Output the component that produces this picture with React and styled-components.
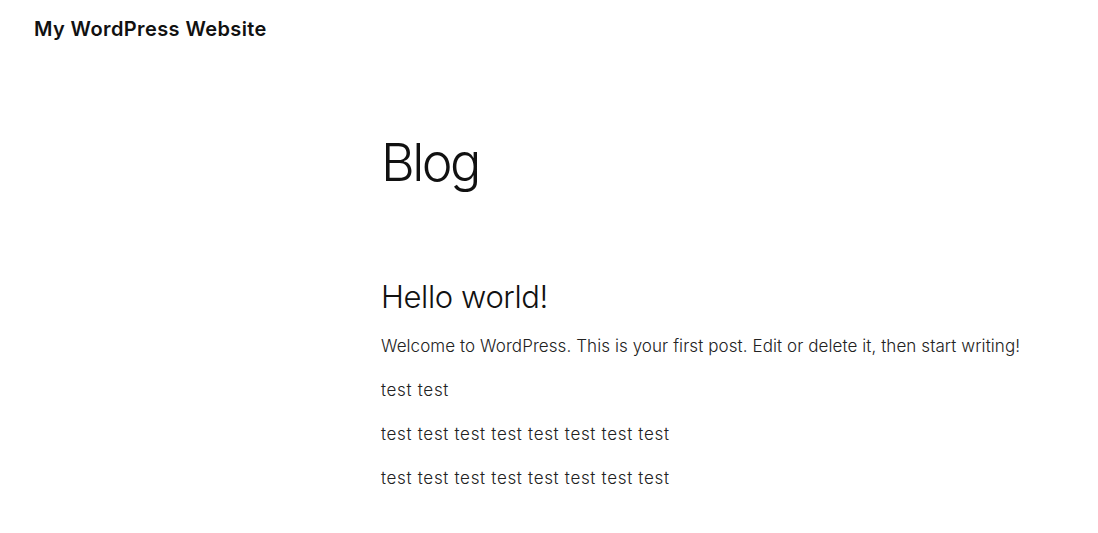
import React from "react";
import styled, { createGlobalStyle } from "styled-components";

const Global = createGlobalStyle`
  html, body { margin: 0; padding: 0; background: #fff; }
  body { font-family: Inter, "Noto Sans", sans-serif; color: #111; -webkit-font-smoothing: antialiased; }
`;

const Header = styled.header`
  display: flex;
  align-items: center;
  padding: 14px 34px 0;
  height: 30px;
`;

const SiteTitle = styled.a`
  font-size: 20px;
  font-weight: 600;
  line-height: 30px;
  letter-spacing: 0.4px;
  color: #111;
  text-decoration: none;
`;

const Main = styled.main`
  display: flex;
  flex-direction: column;
  padding-left: 381px;
`;

const PageTitle = styled.h1`
  margin: 89px 0 0;
  font-size: 52px;
  font-weight: 300;
  line-height: 60px;
  letter-spacing: -2.6px;
  color: #111;
`;

const Post = styled.article`
  display: flex;
  flex-direction: column;
  margin-top: 84px;
`;

const PostTitle = styled.h2`
  margin: 0 0 15px;
  font-size: 31px;
  font-weight: 300;
  line-height: 40px;
  letter-spacing: -0.4px;
  color: #111;
`;

const Para = styled.p`
  margin: 0 0 16px;
  font-size: 17px;
  font-weight: 300;
  line-height: 28px;
  letter-spacing: ${(p) => p.$tracking ?? "0.08px"};
  color: #222;
`;

export default function App() {
  return (
    <>
      <Global />
      <Header>
        <SiteTitle href="#">My WordPress Website</SiteTitle>
      </Header>
      <Main>
        <PageTitle>Blog</PageTitle>
        <Post>
          <PostTitle>Hello world!</PostTitle>
          <Para>Welcome to WordPress. This is your first post. Edit or delete it, then start writing!</Para>
          <Para $tracking="0.67px">test test</Para>
          <Para $tracking="0.67px">test test test test test test test test</Para>
          <Para $tracking="0.67px">test test test test test test test test</Para>
        </Post>
      </Main>
    </>
  );
}
